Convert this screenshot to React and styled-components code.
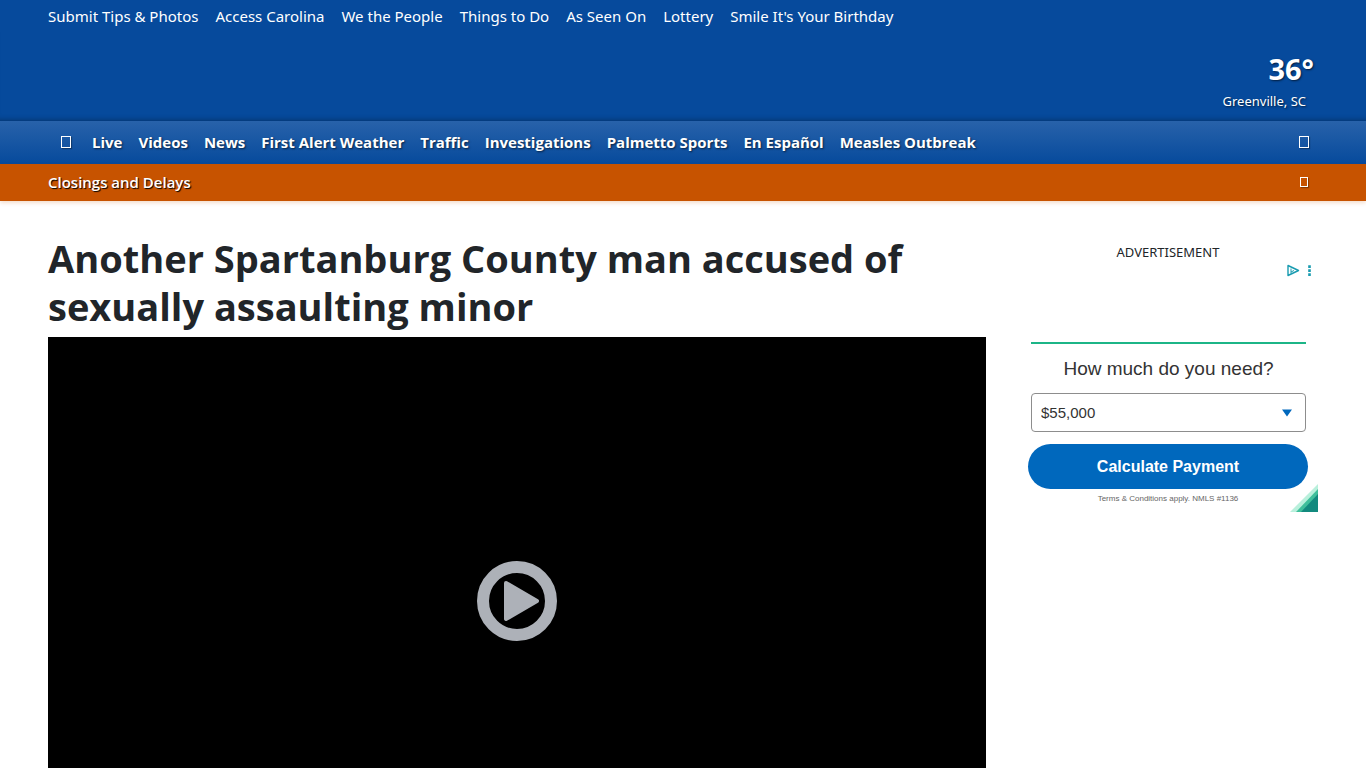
import React from "react";
import styled, { createGlobalStyle } from "styled-components";

const colors = {
  blue: "#064a9c",
  blueLight: "#2862aa",
  orange: "#c75300",
  text: "#212529",
  adBlue: "#0068bd",
  adGreen: "#1cb587",
  adTeal: "#189bb0",
};

const topLinks = [
  "Submit Tips & Photos",
  "Access Carolina",
  "We the People",
  "Things to Do",
  "As Seen On",
  "Lottery",
  "Smile It's Your Birthday",
];

const navLinks = [
  "Live",
  "Videos",
  "News",
  "First Alert Weather",
  "Traffic",
  "Investigations",
  "Palmetto Sports",
  "En Español",
  "Measles Outbreak",
];

const lightFont = `"Segoe UI", "Noto Sans", "Open Sans", sans-serif`;

const GlobalStyle = createGlobalStyle`
  *,
  *::before {
    box-sizing: border-box;
  }
  body {
    margin: 0;
    background: #fff;
    color: ${colors.text};
    font-family: "Segoe UI", "Open Sans", "Noto Sans", sans-serif;
    font-size: 15px;
    line-height: 24px;
  }
`;

const Header = styled.header`
  background: ${colors.blue};
  color: #fff;
`;

const TopBar = styled.nav`
  display: flex;
  gap: 17px;
  padding: 4px 48px;
  font-family: ${lightFont};
  white-space: nowrap;
  a {
    color: #fff;
    text-decoration: none;
  }
`;

const Masthead = styled.div`
  display: flex;
  justify-content: flex-end;
  padding: 16px 52px 8px 48px;
  box-shadow: inset 0 -6px 6px -6px rgba(0, 0, 0, 0.4);
`;

const Weather = styled.a`
  display: flex;
  flex-direction: column;
  align-items: flex-end;
  color: #fff;
  text-decoration: none;
  text-shadow: 1px 1px 2px rgba(0, 0, 0, 0.6);
`;

const Temperature = styled.span`
  font-size: 29px;
  font-weight: 700;
  line-height: 42px;
`;

const City = styled.span`
  font-family: ${lightFont};
  font-size: 13px;
  line-height: 23px;
  padding-right: 8px;
`;

const NavBar = styled.nav`
  display: flex;
  align-items: center;
  height: 43px;
  padding: 0 48px 2px;
  background: linear-gradient(${colors.blueLight}, ${colors.blue});
`;

const NavLinks = styled.div`
  display: flex;
  flex: 1;
  gap: 16px;
  margin-left: 8px;
  white-space: nowrap;
  a {
    color: #fff;
    font-weight: 700;
    text-decoration: none;
    text-shadow: 1px 1px 2px rgba(0, 0, 0, 0.6);
  }
`;

const IconButton = styled.button`
  display: flex;
  align-items: center;
  justify-content: center;
  width: ${(p) => p.$width}px;
  height: 28px;
  padding: 0;
  border: 0;
  background: transparent;
  cursor: pointer;
  &::before {
    content: "";
    width: ${(p) => (p.$small ? "8px" : "10px")};
    height: ${(p) => (p.$small ? "10px" : "12px")};
    border: 1px solid #fff;
    box-shadow: 1px 1px 1px rgba(0, 0, 0, 0.3);
  }
`;

const AlertBar = styled.div`
  display: flex;
  align-items: center;
  justify-content: space-between;
  height: 37px;
  padding: 0 48px 1px;
  background: ${colors.orange};
  box-shadow: 0 2px 4px rgba(199, 83, 0, 0.2);
  a {
    color: #fff;
    font-weight: 600;
    text-decoration: none;
    text-shadow: 1px 1px 1px #000;
  }
`;

const Page = styled.div`
  display: grid;
  grid-template-columns: minmax(0, 1fr) 300px;
  gap: 32px;
  padding: 33px 48px 48px;
`;

const Headline = styled.h1`
  margin: 0 0 7px;
  font-size: 38px;
  font-weight: 700;
  line-height: 48px;
`;

const Video = styled.div`
  display: flex;
  align-items: center;
  justify-content: center;
  aspect-ratio: 16 / 9;
  background: #000;
`;

const PlayButton = styled.button`
  display: block;
  padding: 0;
  border: 0;
  background: transparent;
  cursor: pointer;
  svg {
    display: block;
  }
`;

const Sidebar = styled.aside`
  padding-top: 6px;
`;

const AdLabel = styled.div`
  font-family: ${lightFont};
  font-size: 13px;
  text-align: center;
`;

const AdChoices = styled.div`
  display: flex;
  justify-content: flex-end;
  padding-right: 5px;
  svg {
    display: block;
  }
`;

const AdCard = styled.form`
  position: relative;
  margin-top: 64px;
  padding: 0 10px 7px;
  font-family: "Liberation Sans", Arial, sans-serif;
  text-align: center;
`;

const AdQuestion = styled.label`
  display: block;
  margin: 0 2px 0 3px;
  padding: 12px 0;
  border-top: 2px solid ${colors.adGreen};
  color: #333;
  font-size: 19px;
  line-height: 25px;
`;

const SelectWrap = styled.div`
  position: relative;
  margin: 0 2px 12px 3px;
  svg {
    position: absolute;
    top: 16px;
    right: 14px;
    pointer-events: none;
  }
`;

const AmountSelect = styled.select`
  display: block;
  width: 100%;
  height: 39px;
  padding: 0 9px;
  appearance: none;
  border: 1px solid #8d8d8d;
  border-radius: 4px;
  background: #fff;
  color: #333;
  font: 15px "Liberation Sans", Arial, sans-serif;
`;

const CalculateButton = styled.button`
  display: block;
  width: 100%;
  height: 45px;
  border: 0;
  border-radius: 23px;
  background: ${colors.adBlue};
  color: #fff;
  font: 700 16px "Liberation Sans", Arial, sans-serif;
  cursor: pointer;
`;

const AdTerms = styled.div`
  margin-top: 4px;
  color: #666;
  font-size: 8px;
  line-height: 12px;
`;

const Corner = styled.svg`
  position: absolute;
  right: 0;
  bottom: 0;
`;

export default function App() {
  return (
    <>
      <GlobalStyle />
      <Header>
        <TopBar aria-label="Quick links">
          {topLinks.map((label) => (
            <a href="#" key={label}>{label}</a>
          ))}
        </TopBar>
        <Masthead>
          <Weather href="#">
            <Temperature>36°</Temperature>
            <City>Greenville, SC</City>
          </Weather>
        </Masthead>
        <NavBar aria-label="Main">
          <IconButton $width={36} aria-label="Menu" />
          <NavLinks>
            {navLinks.map((label) => (
              <a href="#" key={label}>{label}</a>
            ))}
          </NavLinks>
          <IconButton $width={28} aria-label="Search" />
        </NavBar>
      </Header>
      <AlertBar>
        <a href="#">Closings and Delays</a>
        <IconButton $width={28} $small aria-label="Dismiss" />
      </AlertBar>

      <Page>
        <main>
          <Headline>Another Spartanburg County man accused of sexually assaulting minor</Headline>
          <Video>
            <PlayButton aria-label="Play video">
              <svg width="80" height="80" viewBox="0 0 80 80">
                <circle cx="40" cy="40" r="34" fill="none" stroke="#adb1b8" strokeWidth="12" />
                <path
                  d="M29 22 L60 40 L29 58 Z"
                  fill="#adb1b8"
                  stroke="#adb1b8"
                  strokeWidth="4"
                  strokeLinejoin="round"
                />
              </svg>
            </PlayButton>
          </Video>
        </main>

        <Sidebar>
          <AdLabel>ADVERTISEMENT</AdLabel>
          <AdChoices>
            <svg width="26" height="14" viewBox="0 0 26 14" fill="none" stroke={colors.adTeal}>
              <path d="M1 1.5 V11.5 L11.5 6.5 Z" strokeWidth="1.4" strokeLinejoin="round" />
              <path d="M4 4.5 V9.5 M4 8 L7 6.5" strokeWidth="1" />
              <path d="M22.5 1.3 V3.9 M22.5 5.3 V7.9 M22.5 9.3 V11.9" strokeWidth="2.6" />
            </svg>
          </AdChoices>
          <AdCard onSubmit={(e) => e.preventDefault()}>
            <AdQuestion htmlFor="amount">How much do you need?</AdQuestion>
            <SelectWrap>
              <AmountSelect id="amount" defaultValue="55000">
                <option value="55000">$55,000</option>
              </AmountSelect>
              <svg width="10" height="8" viewBox="0 0 10 8">
                <path d="M0 0.5 H10 L5 7.5 Z" fill={colors.adBlue} />
              </svg>
            </SelectWrap>
            <CalculateButton type="submit">Calculate Payment</CalculateButton>
            <AdTerms>Terms &amp; Conditions apply. NMLS #1136</AdTerms>
            <Corner width="28" height="28" viewBox="0 0 28 28" aria-hidden="true">
              <path d="M28 0 V28 H0 Z" fill="#b9f0dc" />
              <path d="M28 5 V28 H6 Z" fill="#3fbf9b" />
              <path d="M28 10 V28 H11 Z" fill="#128a7e" />
            </Corner>
          </AdCard>
        </Sidebar>
      </Page>
    </>
  );
}
